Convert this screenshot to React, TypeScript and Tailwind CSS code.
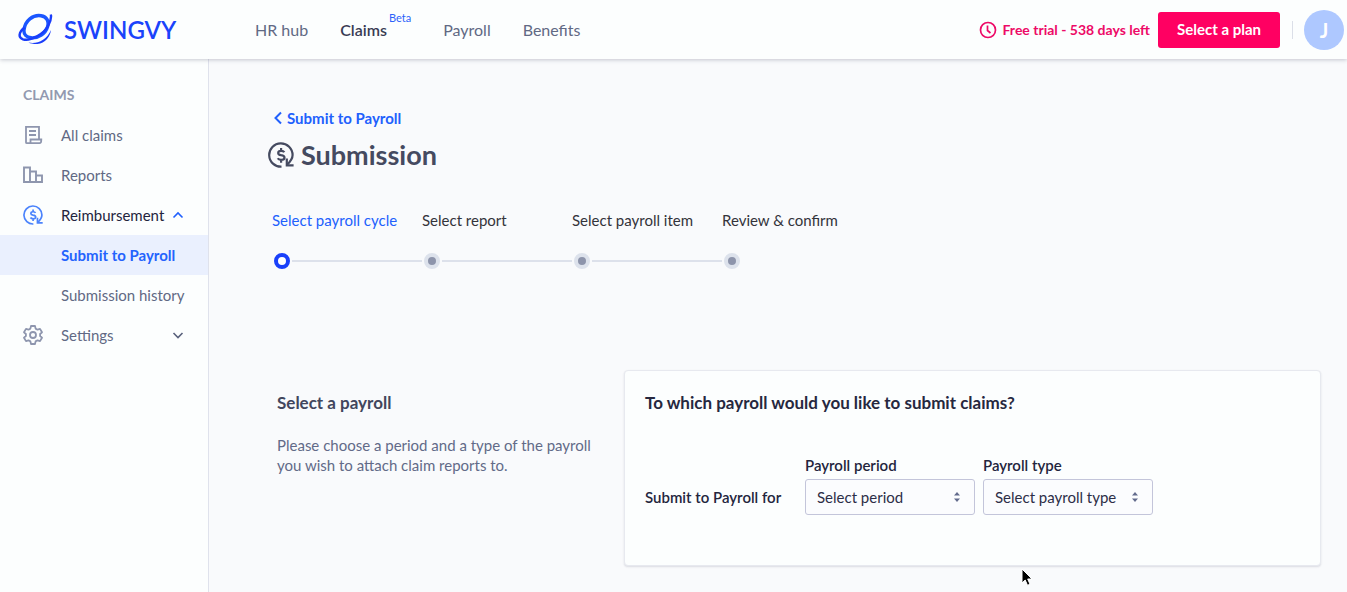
import type { ReactNode } from "react";

function LogoMark() {
  return (
    <svg width="36" height="34" viewBox="1 1 36 34" fill="none" aria-hidden="true">
      <path d="M7 18C8 8.500 16 2.500 24 3.700C30 4.600 32.200 9.500 30.500 15C28.500 21.500 21.500 26.500 14 25.800C9.500 25.300 6.500 22.500 7 18Z" stroke="#1a56ff" strokeWidth="3.400" />
      <path d="M7.500 15.500C1.500 20.500 1 25.500 6 27.300C13 29.500 27 22.500 31.500 13C33.500 9 34.500 5 33.800 2.500" stroke="#1a3dfa" strokeWidth="2.400" />
      <path d="M11.500 30.500C19.500 32.500 29.500 28.500 34 18C33.500 24 28 31.800 20.500 32C16.500 32.100 13.500 31.500 11.500 30.500Z" fill="#1a3dfa" />
    </svg>
  );
}

function ReceiptIcon() {
  return (
    <svg width="20" height="20" viewBox="0 0 20 20" fill="none" stroke="currentColor" strokeWidth="1.800" aria-hidden="true">
      <path d="M3 17.500V1.900H16V14M3 17.500Q3 18.200 4 18.200H16.500Q18.300 18.200 18.300 14.500H7.500V18M6 6H13M6 10H13" />
    </svg>
  );
}

function ReportsIcon() {
  return (
    <svg width="20" height="20" viewBox="0 0 20 20" fill="none" stroke="currentColor" strokeWidth="1.900" aria-hidden="true">
      <path d="M1 2.500H7V17H1ZM7 6.500H13V17H7ZM13 10.500H19V17H13Z" />
    </svg>
  );
}

function CoinIcon({ className }: { className: string }) {
  return (
    <svg className={className} viewBox="0 0 26 26" fill="none" stroke="currentColor" strokeWidth="2.200" aria-hidden="true">
      <path d="M13.500 24.700A11.700 11.700 0 1 1 24.600 13Q24.600 17.500 19 22.800" />
      <path d="M18.800 16.500V23.300H25.600" />
      <path d="M16.300 10.300Q15.500 8.800 13.100 8.800Q10.200 8.800 10.200 10.900Q10.200 12.700 13.100 13.200Q16.500 13.700 16.500 15.700Q16.500 17.900 13.100 17.900Q10.600 17.900 9.700 16.300M13.100 6V9M13.100 17.900V20.700" />
    </svg>
  );
}

function GearIcon() {
  return (
    <svg width="20" height="20" viewBox="0 0 20 20" fill="none" stroke="currentColor" strokeWidth="1.800" strokeLinejoin="round" aria-hidden="true">
      <path d="M8 1H12L12.600 3.600L14.500 4.700L17 3.900L19 7.300L17.100 9V11L19 12.700L17 16.100L14.500 15.300L12.600 16.400L12 19H8L7.400 16.400L5.500 15.300L3 16.100L1 12.700L2.900 11V9L1 7.300L3 3.900L5.500 4.700L7.400 3.600Z" />
      <circle cx="10" cy="10" r="3" />
    </svg>
  );
}

function Chevron({ d, className }: { d: string; className: string }) {
  return (
    <svg width="12" height="12" viewBox="0 0 12 12" fill="none" stroke="currentColor" strokeWidth="1.600" className={className} aria-hidden="true">
      <path d={d} />
    </svg>
  );
}

function NavItem({ icon, className, children, chevron }: { icon?: ReactNode; className: string; children: ReactNode; chevron?: ReactNode }) {
  return (
    <li>
      <a href="#" className={`flex h-10 items-center pr-6 pl-[23px] ${className}`}>
        <span className="mr-[18px] w-5 shrink-0">{icon}</span>
        <span className="flex-1 whitespace-nowrap">{children}</span>
        {chevron}
      </a>
    </li>
  );
}

const steps = ["Select payroll cycle", "Select report", "Select payroll item", "Review & confirm"];

function Stepper() {
  return (
    <ol className="mt-[39px] flex pl-[63px]">
      {steps.map((step, i) => (
        <li key={step} className="w-[150px] shrink-0">
          <span className={`block leading-5 whitespace-nowrap ${i === 0 ? "text-[#2160fd]" : "text-[#33333a]"}`}>{step}</span>
          <span className="mt-[23px] flex items-center gap-0.5 pl-0.5">
            <span
              className={
                i === 0
                  ? "size-4 shrink-0 rounded-full border-4 border-[#1a40fa] bg-white"
                  : "size-4 shrink-0 rounded-full border-4 border-[#dde2ec] bg-[#8d94ab]"
              }
            />
            {i < steps.length - 1 && <span className="h-0.5 flex-1 bg-[#dde1eb]" />}
          </span>
        </li>
      ))}
    </ol>
  );
}

function SelectField({ id, label, placeholder }: { id: string; label: string; placeholder: string }) {
  return (
    <div className="w-[170px]">
      <label htmlFor={id} className="block leading-5 font-semibold text-[#23253d]">{label}</label>
      <div className="mt-1 grid items-center">
        <select
          id={id}
          className="col-start-1 row-start-1 h-9 w-full appearance-none rounded-[3px] border border-[#c3c5da] bg-[#fbfcfe] pr-8 pl-[11px] text-[#2c2e47]"
        >
          <option>{placeholder}</option>
        </select>
        <svg width="8" height="12" viewBox="0 0 8 12" fill="#626b8d" className="pointer-events-none col-start-1 row-start-1 mr-[14px] justify-self-end" aria-hidden="true">
          <path d="M4 1L7 4.500H1ZM4 11L7 7.500H1Z" />
        </svg>
      </div>
    </div>
  );
}

export default function App() {
  return (
    <div className="flex min-h-screen flex-col bg-[#f9fafc] font-['Lato',sans-serif] text-[15px] text-[#616984]">
      <header className="z-10 flex h-[59px] items-center bg-[#fcfefe] pr-[3px] pl-[18px] shadow-[0_1px_4px_rgba(60,65,95,0.28)]">
        <a href="#" className="flex w-[237px] shrink-0 items-center gap-2.5 text-[#1a43fb]">
          <LogoMark />
          <span className="text-[24px] leading-6 font-semibold">SWINGVY</span>
        </a>
        <nav className="flex items-center gap-8 text-[16px] whitespace-nowrap">
          <a href="#">HR hub</a>
          <a href="#" className="flex text-[#393c54]">
            <span className="font-semibold">Claims</span>
            <sup className="ml-0.5 text-[11px] leading-3 text-[#2c62fa]">Beta</sup>
          </a>
          <a href="#">Payroll</a>
          <a href="#">Benefits</a>
        </nav>
        <div className="ml-auto flex shrink-0 items-center font-bold">
          <svg width="18" height="18" viewBox="0 0 18 18" fill="none" stroke="#ed0a67" strokeWidth="1.700" aria-hidden="true">
            <circle cx="9" cy="9" r="7.500" />
            <path d="M8.500 4.500V9.500L11.500 12" />
          </svg>
          <span className="ml-1.5 text-[14px] whitespace-nowrap text-[#ed0a67]">Free trial - 538 days left</span>
          <button type="button" className="ml-2 h-9 w-[122px] rounded-[3px] bg-[#ff0062] text-white">Select a plan</button>
          <span className="ml-3 h-[18px] w-px bg-[#dbdfe8]" />
          <button type="button" className="ml-[11px] size-10 rounded-full bg-[#aec8ff] text-[20px] text-white">J</button>
        </div>
      </header>

      <div className="flex flex-1">
        <aside className="w-[209px] shrink-0 border-r border-[#dfe2ec] bg-[#fcfefe] pt-[26px]">
          <h2 className="mb-2.5 pl-[23px] text-[14px] leading-5 font-bold text-[#9299b0]">CLAIMS</h2>
          <ul>
            <NavItem icon={<ReceiptIcon />} className="text-[#616984] [&_svg]:text-[#8e96ae]">All claims</NavItem>
            <NavItem icon={<ReportsIcon />} className="text-[#616984] [&_svg]:text-[#8e96ae]">Reports</NavItem>
            <NavItem
              icon={<CoinIcon className="size-5 text-[#4b83fc]" />}
              className="text-[#23243d]"
              chevron={<Chevron d="M1.500 8.500L6 4L10.500 8.500" className="text-[#2160fd]" />}
            >
              Reimbursement
            </NavItem>
            <NavItem className="bg-[#eaf0fe] font-bold text-[#2463fd]">Submit to Payroll</NavItem>
            <NavItem className="text-[#616984]">Submission history</NavItem>
            <NavItem
              icon={<span className="text-[#8e96ae]"><GearIcon /></span>}
              className="text-[#616984]"
              chevron={<Chevron d="M1.500 4L6 8.500L10.500 4" className="text-[#59617c]" />}
            >
              Settings
            </NavItem>
          </ul>
        </aside>

        <main className="relative min-w-0 flex-1 pt-[49px] pr-[26px]">
          <a href="#" className="ml-16 flex w-fit items-center gap-1 leading-5 font-bold text-[#2160fd]">
            <svg width="10" height="14" viewBox="0 0 10 14" fill="none" stroke="currentColor" strokeWidth="2" aria-hidden="true">
              <path d="M8 1.500L2.500 7L8 12.500" />
            </svg>
            Submit to Payroll
          </a>
          <h1 className="mt-[11px] ml-[59px] flex items-center gap-[7px] text-[27px] leading-8 font-bold text-[#454a60]">
            <CoinIcon className="size-[26px]" />
            Submission
          </h1>
          <Stepper />

          <section className="mt-[101px] flex">
            <div className="w-[415px] shrink-0 pt-[23px] pl-[68px]">
              <h2 className="text-[17px] leading-5 font-bold text-[#42465d]">Select a payroll</h2>
              <p className="mt-[22px] max-w-[320px] leading-5 text-[#626a88]">
                Please choose a period and a type of the payroll you wish to attach claim reports to.
              </p>
            </div>
            <form className="min-w-0 flex-1 rounded border border-[#e7e9ef] bg-[#fcfefe] px-5 pt-[22px] pb-[50px] shadow-[0_1px_2px_rgba(60,65,95,0.16)]">
              <h3 className="text-[17px] leading-5 font-bold text-[#26283f]">To which payroll would you like to submit claims?</h3>
              <div className="mt-[42px] flex items-end gap-2">
                <span className="mb-2 w-[152px] shrink-0 leading-5 font-semibold text-[#23253d]">Submit to Payroll for</span>
                <SelectField id="payroll-period" label="Payroll period" placeholder="Select period" />
                <SelectField id="payroll-type" label="Payroll type" placeholder="Select payroll type" />
              </div>
            </form>
          </section>

          <svg width="13" height="20" viewBox="0 0 13 20" className="pointer-events-none absolute top-[509px] left-[812px]" aria-hidden="true">
            <path d="M1 1V15L4.200 12L6.500 17.300L9 16.200L6.700 11H11Z" fill="#000" stroke="#fff" strokeWidth="1" />
          </svg>
        </main>
      </div>
    </div>
  );
}
